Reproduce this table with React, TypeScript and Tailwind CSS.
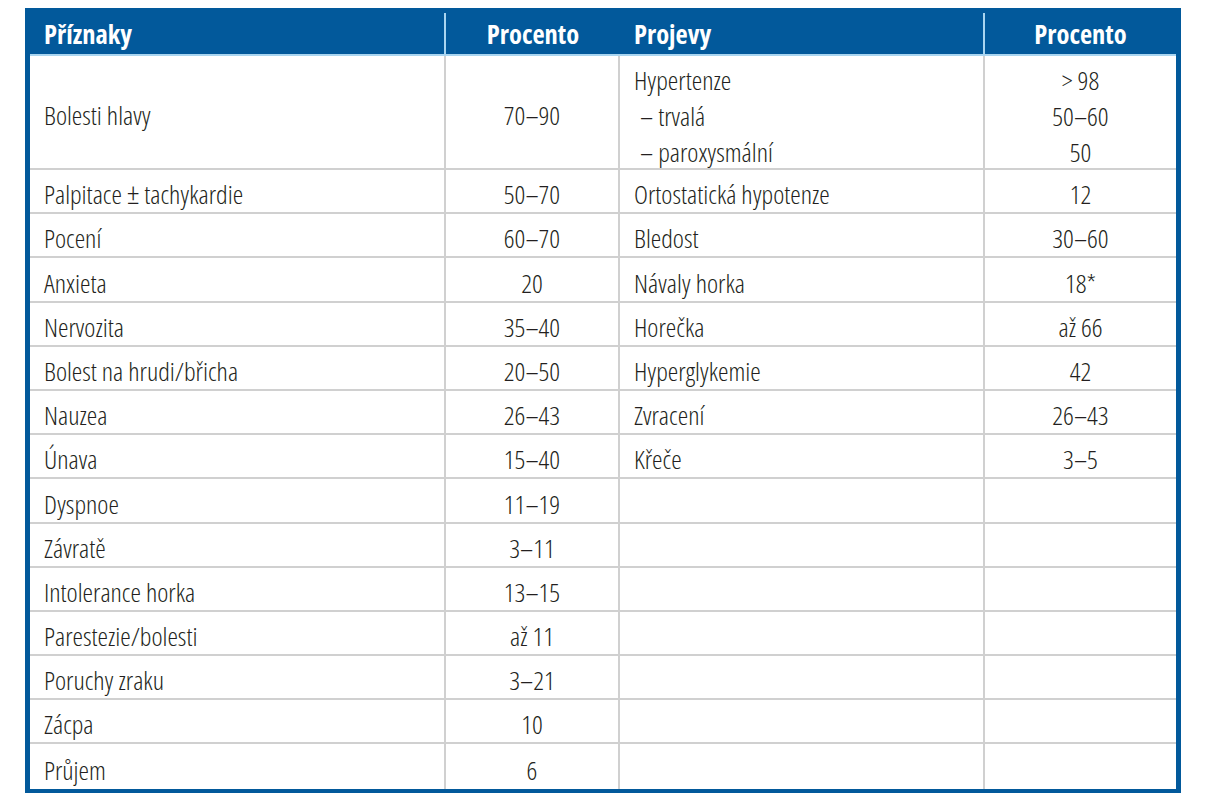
import React from "react";

const left: [string, React.ReactNode][] = [
  ["Palpitace ± tachykardie", "50–70"],
  ["Pocení", "60–70"],
  ["Anxieta", "20"],
  ["Nervozita", "35–40"],
  ["Bolest na hrudi/břicha", "20–50"],
  ["Nauzea", "26–43"],
  ["Únava", "15–40"],
  ["Dyspnoe", "11–19"],
  ["Závratě", "3–11"],
  ["Intolerance horka", "13–15"],
  ["Parestezie/bolesti", "až 11"],
  ["Poruchy zraku", "3–21"],
  ["Zácpa", "10"],
  ["Průjem", "6"],
];

const right: [string, string][] = [
  ["Ortostatická hypotenze", "12"],
  ["Bledost", "30–60"],
  ["Návaly horka", "18*"],
  ["Horečka", "až 66"],
  ["Hyperglykemie", "42"],
  ["Zvracení", "26–43"],
  ["Křeče", "3–5"],
];

function Label({ text }: { text: string }) {
  if (text.includes("±")) {
    const [a, b] = text.split("±");
    return (
      <span>
        {a}
        <span className="text-[30px] leading-none">±</span>
        {b}
      </span>
    );
  }
  return <span>{text}</span>;
}

export default function App() {
  return (
    <div className="w-[1219px] h-[800px] bg-white pt-[8px] pl-[25px] font-['Open_Sans',sans-serif] font-stretch-[75%]">
      <div className="w-[1156px] border-x-[5px] border-b-[4px] border-[#02599b] text-[26.5px] text-[#231f20] font-light">
        <div className="flex h-[48px] bg-[#02599b] text-white font-bold border-b-2 border-[#a9d5f0]">
          <div className="w-[414px] pl-[14px] pt-[7px] flex items-center">Příznaky</div>
          <div className="w-[2px] mt-[5px] bg-[#a9d5f0]" />
          <div className="w-[174px] pt-[7px] flex items-center justify-center">Procento</div>
          <div className="w-[363px] pl-[14px] pt-[7px] flex items-center">Projevy</div>
          <div className="w-[2px] mt-[5px] bg-[#a9d5f0]" />
          <div className="w-[191px] pt-[7px] flex items-center justify-center">Procento</div>
        </div>
        <div className="flex h-[114px] border-b-2 border-[#d0d0d0]">
          <div className="w-[416px] pl-[14px] pt-[8px] border-r-2 border-[#d0d0d0] flex items-center">Bolesti hlavy</div>
          <div className="w-[174px] pt-[8px] border-r-2 border-[#d0d0d0] flex items-center justify-center">70–90</div>
          <div className="w-[365px] pl-[14px] pt-[8px] border-r-2 border-[#d0d0d0] flex flex-col justify-center leading-[36px]">
            <div>Hypertenze</div>
            <div className="pl-[6px]">– trvalá</div>
            <div className="pl-[6px]">– paroxysmální</div>
          </div>
          <div className="flex-1 pt-[8px] flex flex-col justify-center items-center leading-[36px]">
            <div>&gt; 98</div>
            <div>50–60</div>
            <div>50</div>
          </div>
        </div>
        {left.map(([a, b], i) => {
          const r = right[i];
          const last = i === left.length - 1;
          return (
            <div key={i} className={`flex h-[44.2px] ${last ? "" : "border-b-2 border-[#d0d0d0]"}`}>
              <div className="w-[416px] pl-[14px] pt-[8px] border-r-2 border-[#d0d0d0] flex items-center">
                <Label text={a} />
              </div>
              <div className="w-[174px] pt-[8px] border-r-2 border-[#d0d0d0] flex items-center justify-center">{b}</div>
              <div className="w-[365px] pl-[14px] pt-[8px] border-r-2 border-[#d0d0d0] flex items-center">{r ? r[0] : ""}</div>
              <div className="flex-1 pt-[8px] flex items-center justify-center">{r ? r[1] : ""}</div>
            </div>
          );
        })}
      </div>
    </div>
  );
}
